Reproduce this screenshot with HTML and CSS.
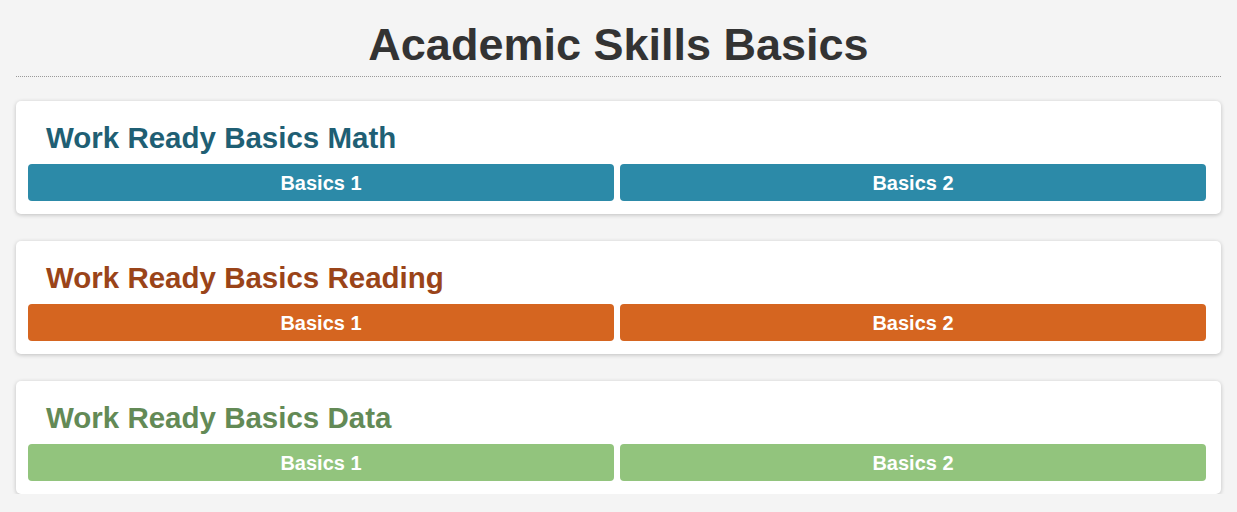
FILE: index.html
```html
<!DOCTYPE html>
<html>
<head>
<meta charset="utf-8">
<link rel="stylesheet" href="styles.css">
</head>
<body>
<h1 class="page-title">Academic Skills Basics</h1>
<div class="sections">
  <section class="card math">
    <h2 class="card-title">Work Ready Basics Math</h2>
    <div class="buttons">
      <a class="btn">Basics 1</a>
      <a class="btn">Basics 2</a>
    </div>
  </section>
  <section class="card reading">
    <h2 class="card-title">Work Ready Basics Reading</h2>
    <div class="buttons">
      <a class="btn">Basics 1</a>
      <a class="btn">Basics 2</a>
    </div>
  </section>
  <section class="card data">
    <h2 class="card-title">Work Ready Basics Data</h2>
    <div class="buttons">
      <a class="btn">Basics 1</a>
      <a class="btn">Basics 2</a>
    </div>
  </section>
</div>
</body>
</html>
```
FILE: styles.css
```css
html, body {
  margin: 0;
  padding: 0;
}
body {
  background: #f4f4f4;
  font-family: "Liberation Sans", Arial, sans-serif;
  padding: 0 16px;
}
.page-title {
  margin: 19px 0 0;
  padding-bottom: 5px;
  font-size: 45px;
  line-height: 52px;
  font-weight: bold;
  color: #333333;
  text-align: center;
  border-bottom: 1px dotted #9a9a9a;
}
.sections {
  display: flex;
  flex-direction: column;
  gap: 27px;
  margin-top: 24px;
}
.card {
  background: #ffffff;
  border-radius: 5px;
  box-shadow: 0 1px 4px rgba(0, 0, 0, 0.22);
  padding: 19px 15px 13px 12px;
}
.card-title {
  margin: 0 0 9px 18px;
  font-size: 29.5px;
  line-height: 35px;
  font-weight: bold;
}
.buttons {
  display: grid;
  grid-template-columns: 1fr 1fr;
  gap: 6px;
}
.btn {
  display: block;
  height: 36px;
  padding-top: 1px;
  line-height: 37px;
  border-radius: 4px;
  color: #ffffff;
  font-size: 20px;
  font-weight: bold;
  text-align: center;
}
.math .card-title { color: #1f5f74; }
.math .btn { background: #2c8aa8; }
.reading .card-title { color: #9a4419; }
.reading .btn { background: #d56520; }
.data .card-title { color: #638a56; }
.data .btn { background: #92c47d; }
```
